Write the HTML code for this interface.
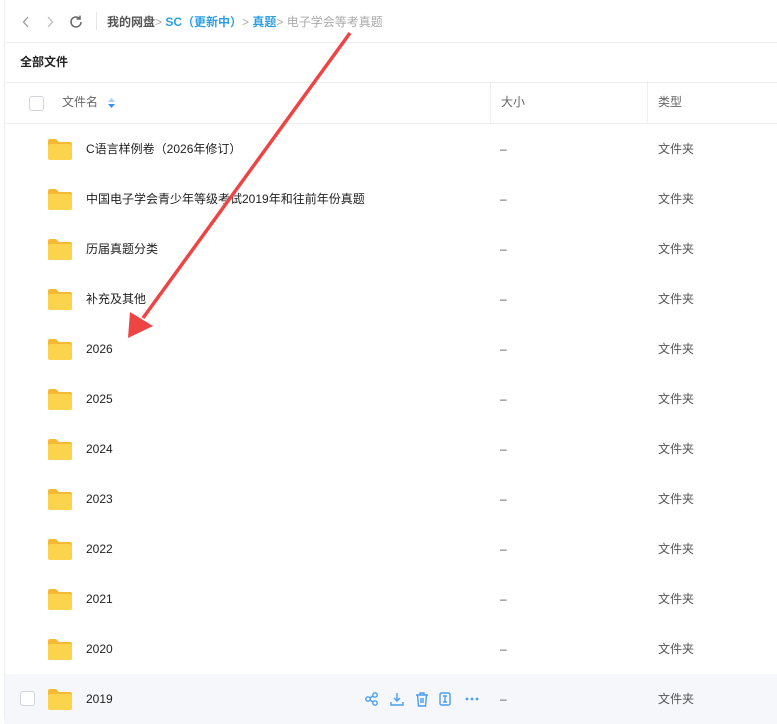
<!DOCTYPE html><html><head><meta charset="utf-8"><style>
body{margin:0;width:777px;height:719px;background:#fff;font-family:"Liberation Sans","Noto Sans CJK SC",sans-serif;position:relative;overflow:hidden;color:#333}
.l{position:absolute;left:4px;top:0;width:1px;height:719px;background:#eceef2}
.top{position:absolute;left:4px;right:0;top:0;height:42px;border-bottom:1px solid #eceef2}
.bc{position:absolute;left:107px;top:0;line-height:44px;font-size:12px;white-space:nowrap;color:#555;font-weight:bold}
.h2{position:absolute;left:4px;right:0;top:42px;height:40px;line-height:40px;border-bottom:1px solid #eceef2;font-size:12px;font-weight:bold;color:#222}
.hd{position:absolute;left:4px;right:0;top:82px;height:41px;line-height:41px;border-bottom:1px solid #eceef2;font-size:12px;color:#666}
.cb{position:absolute;width:13px;height:13px;border:1px solid #d0d3d9;border-radius:3px;background:#fff}
.row{position:absolute;left:4px;right:0;height:50px;line-height:50px;font-size:12px;color:#222}
.f{position:absolute;left:43px;top:14px;width:26px;height:22px}
.t{position:absolute;top:0}
.sep{position:absolute;top:82px;width:1px;height:41px;background:#eceef2}
</style></head><body>
<div class="top">
<svg style="position:absolute;left:18px;top:15px" width="60" height="14" viewBox="0 0 60 14"><path d="M6 2L1.5 7L6 12" fill="none" stroke="#999" stroke-width="1.3"/><path d="M26 2L30.5 7L26 12" fill="none" stroke="#bbb" stroke-width="1.3"/><path d="M59 7a5 5 0 1 1-1.6-3.7" fill="none" stroke="#666" stroke-width="1.5"/><path d="M58 0.5v3.5H54.5" fill="none" stroke="#666" stroke-width="1.5"/></svg>
<div style="position:absolute;left:92px;top:12px;width:1px;height:18px;background:#e5e5e5"></div>
</div>
<div class="bc">我的网盘<span style="color:#aaa;font-weight:normal">&gt; </span><span style="color:#2c9ee8">SC（更新中）</span><span style="color:#aaa;font-weight:normal">&gt; </span><span style="color:#2c9ee8">真题</span><span style="color:#aaa;font-weight:normal">&gt; 电子学会等考真题</span></div>
<div class="h2"><span style="position:absolute;left:16px">全部文件</span></div>
<div class="hd"><div class="cb" style="left:25px;top:14px"></div><span style="position:absolute;left:58px">文件名</span>
<svg style="position:absolute;left:104px;top:16px" width="7" height="10" viewBox="0 0 7 10"><path d="M3.5 0L7 4H0z" fill="#a9cdf5"/><path d="M3.5 10L7 6H0z" fill="#3a8ef0"/></svg>
<span style="position:absolute;left:497px">大小</span><span style="position:absolute;left:654px">类型</span></div>
<div class="sep" style="left:490px"></div><div class="sep" style="left:647px"></div>
<div id="rows"></div>
<div class="l"></div>
<script>
var n=["C语言样例卷（2026年修订）","中国电子学会青少年等级考试2019年和往前年份真题","历届真题分类","补充及其他","2026","2025","2024","2023","2022","2021","2020","2019"];
var ic='<svg style="position:absolute;left:360px;top:17px" width="120" height="16" viewBox="0 0 120 16" fill="none" stroke="#4a9ef0" stroke-width="1.4"><circle cx="4" cy="8" r="2.2"/><circle cx="11" cy="4" r="2.2"/><circle cx="11" cy="12" r="2.2"/><path d="M6 7L9 5M6 9L9 11"/><path d="M33 2v8M30 7l3 3 3-3M27 11v3h12v-3"/><path d="M52 4h12M56 4V2h4v2M53.5 4l1 11h7l1-11M57 7v5M59 7v5"/><rect x="76" y="2" width="10" height="12" rx="1.5"/><path d="M79 5h4M81 5v6M79 11h4"/><g fill="#4a9ef0" stroke="none"><circle cx="103" cy="8" r="1.4"/><circle cx="108" cy="8" r="1.4"/><circle cx="113" cy="8" r="1.4"/></g></svg>';
var h="";n.forEach(function(x,i){var y=124+i*50,last=i==11;
h+='<div class="row" style="top:'+y+'px;'+(last?'background:#f5f7fb':'')+'">'+(last?'<div class="cb" style="left:16px;top:17px"></div>':'')+
'<svg class="f" viewBox="0 0 26 22"><path d="M1 3a2 2 0 0 1 2-2h6l3 3h11a2 2 0 0 1 2 2v14a2 2 0 0 1-2 2H3a2 2 0 0 1-2-2z" fill="#f5b936"/><rect x="1" y="6" width="24" height="16" rx="2" fill="#fcd34d"/></svg>'+
'<span class="t" style="left:82px">'+x+'</span><span class="t" style="left:496px;color:#555">–</span><span class="t" style="left:654px;color:#555">文件夹</span>'+
(last?ic:'')+'</div>';});
document.getElementById("rows").innerHTML=h;
</script>
<svg style="position:absolute;left:0;top:0" width="777" height="719"><line x1="350" y1="33" x2="143" y2="318" stroke="#ef4444" stroke-width="3.5"/><polygon points="128,338 130,312 153,326" fill="#ef4444"/></svg>
</body></html>
